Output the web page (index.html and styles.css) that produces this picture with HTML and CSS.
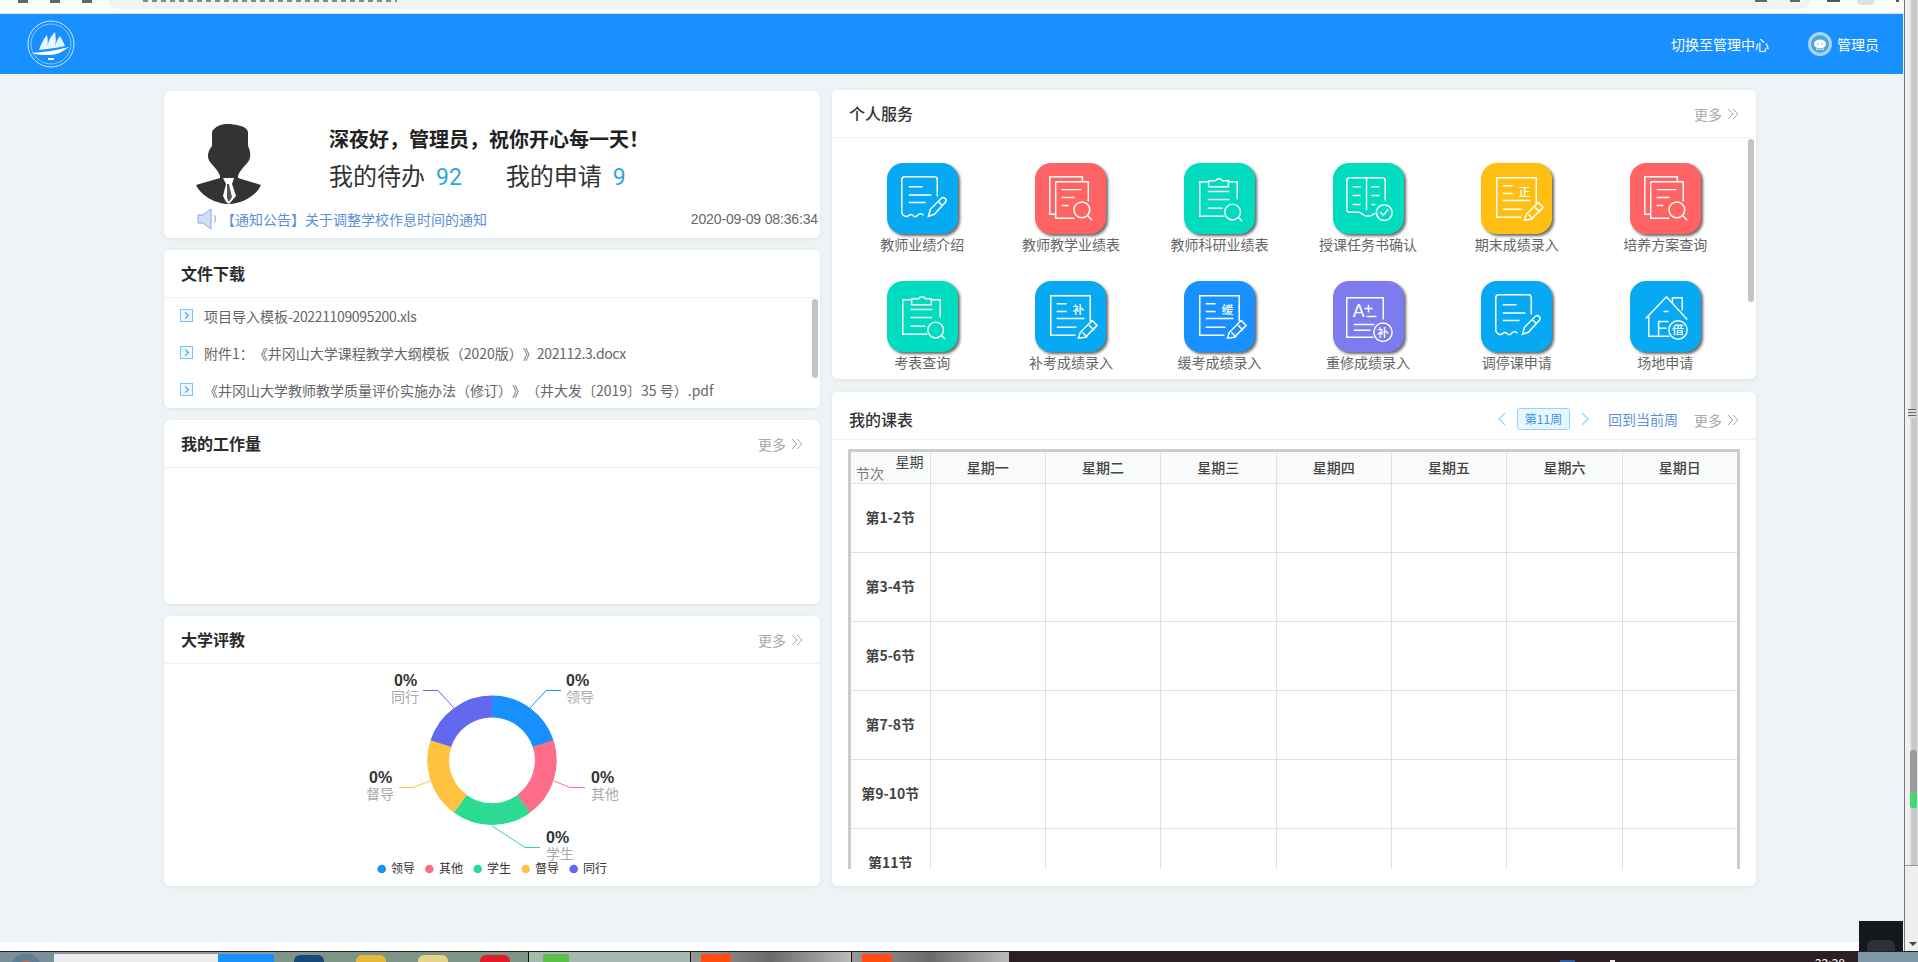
FILE: index.html
```html
<!DOCTYPE html>
<html lang="zh-CN">
<head>
<meta charset="utf-8">
<title>个人中心</title>
<link rel="stylesheet" href="styles.css">
</head>
<body>
<div class="shell">
  <div class="shell-main">
    <div class="chrome">
      <div class="chrome-nav"><i></i><i></i><i></i></div>
      <div class="address"><span></span></div>
      <div class="chrome-tools"><i></i><i class="round"></i><i class="dot"></i></div>
    </div>
    <div class="viewport">
      <header class="topbar">
        <svg class="logo" viewBox="0 0 48 48" width="48" height="48" aria-hidden="true">
          <circle cx="24" cy="24" r="23" fill="none" stroke="#cfeaff" stroke-width="1"/>
          <circle cx="24" cy="24" r="20" fill="none" stroke="#cfeaff" stroke-width=".6"/>
          <path d="M5 33c10-1 22-2 37-6-7 5-12 8-20 8-6 0-12 0-17-2z" fill="#fff"/>
          <path d="M12 30c2-6 4-10 8-15 1 5 1 10 0 14zM20 29c1-7 3-12 8-17 1 6 1 11 0 16zM28 28c1-5 2-9 5-12 2 4 4 7 5 10z" fill="#eaf6ff"/>
          <rect x="21" y="38" width="6" height="2" fill="#e6f4ff"/>
        </svg>
        <div class="topbar-right">
          <span class="switch">切换至管理中心</span>
          <span class="user">
            <svg viewBox="0 0 24 24" width="24" height="24" aria-hidden="true">
              <circle cx="12" cy="12" r="12" fill="#a9d5f3"/>
              <circle cx="12" cy="12" r="9" fill="#4ba6e8"/>
              <ellipse cx="12" cy="12" rx="6" ry="4.6" fill="#fff"/>
              <path d="M8 16c2 2 6 2 8 0v2H8z" fill="#d9eefc"/>
              <circle cx="10" cy="12" r=".8" fill="#6fb7ea"/><circle cx="14" cy="12" r=".8" fill="#6fb7ea"/>
            </svg>
            管理员
          </span>
        </div>
      </header>
      <main class="content">
        <div class="col-left">
          <section class="card welcome">
            <div class="welcome-main">
              <svg class="avatar" viewBox="0 0 66 80" width="66" height="80" aria-hidden="true">
                <path d="M16 8C18 3 26-1 34 0c10 1 17 3 18 8v14c3 6 3 12 0 16-3 4-8 8-10 14v2l23 7c-5 11-19 19-32 19S5 72 0 61l24-7v-2c-2-6-7-10-10-14-3-4-3-10 2-16z" fill="#333"/>
                <path d="M27 54h11l-2 6 4 12-7 8-3-2-3-6 3-12z" fill="#fff"/>
                <path d="M31 60h2l3 13-3 5-2-4z" fill="#555"/>
              </svg>
              <div class="welcome-text">
                <h2>深夜好，管理员，祝你开心每一天！</h2>
                <div class="counts">
                  <span class="count">我的待办<b>92</b></span>
                  <span class="count">我的申请<b>9</b></span>
                </div>
              </div>
            </div>
            <div class="notice">
              <svg viewBox="0 0 22 22" width="22" height="22" aria-hidden="true">
                <path d="M1 7h5l8-6v20l-8-6H1z" fill="#cfe0f7" stroke="#7fa8e2"/>
                <path d="M17 7c2 2.500 2 5.500 0 8" fill="none" stroke="#7fa8e2"/>
              </svg>
              <a class="notice-link">【通知公告】关于调整学校作息时间的通知</a>
              <time>2020-09-09 08:36:34</time>
            </div>
          </section>

          <section class="card files">
            <div class="card-head"><h3>文件下载</h3></div>
            <div class="file-list">
              <div class="file"><i class="file-ico"></i><span>项目导入模板<span class="nums">-20221109095200.xls</span></span></div>
              <div class="file"><i class="file-ico"></i><span>附件1：《井冈山大学课程教学大纲模板（2020版）》<span class="nums">202112.3.docx</span></span></div>
              <div class="file"><i class="file-ico"></i><span>《井冈山大学教师教学质量评价实施办法（修订）》（井大发〔2019〕35 号）.pdf</span></div>
              <div class="scroll-thumb file-thumb"></div>
            </div>
          </section>

          <section class="card workload">
            <div class="card-head"><h3>我的工作量</h3><span class="more">更多<svg viewBox="0 0 12 12" width="12" height="12"><path d="M1 1l5 5-5 5M6 1l5 5-5 5" fill="none" stroke="#aaa"/></svg></span></div>
          </section>

          <section class="card review">
            <div class="card-head"><h3>大学评教</h3><span class="more">更多<svg viewBox="0 0 12 12" width="12" height="12"><path d="M1 1l5 5-5 5M6 1l5 5-5 5" fill="none" stroke="#aaa"/></svg></span></div>
            <svg class="chart" viewBox="0 0 656 222" width="656" height="222">
              <g fill="none" stroke-width="21.800">
                <circle cx="328" cy="96.300" r="53.800" stroke="#1890ff" stroke-dasharray="67.610 270.430" transform="rotate(-90 328 96.300)"/>
                <circle cx="328" cy="96.300" r="53.800" stroke="#ff6d88" stroke-dasharray="67.610 270.430" transform="rotate(-18 328 96.300)"/>
                <circle cx="328" cy="96.300" r="53.800" stroke="#2bdb92" stroke-dasharray="67.610 270.430" transform="rotate(54 328 96.300)"/>
                <circle cx="328" cy="96.300" r="53.800" stroke="#ffc23f" stroke-dasharray="67.610 270.430" transform="rotate(126 328 96.300)"/>
                <circle cx="328" cy="96.300" r="53.800" stroke="#6369ee" stroke-dasharray="67.610 270.430" transform="rotate(198 328 96.300)"/>
              </g>
              <g fill="none" stroke-width="1">
                <polyline points="366,44 382,26.500 397,26.500" stroke="#1890ff"/>
                <polyline points="390,117 406,123.500 421,123.500" stroke="#ff6d88"/>
                <polyline points="328,162 361,183.500 376,183.500" stroke="#2bdb92"/>
                <polyline points="266,117 249,123.500 235,123.500" stroke="#ffc23f"/>
                <polyline points="290,44 274,26.500 259,26.500" stroke="#6369ee"/>
              </g>
              <g class="pct">
                <text x="402" y="22">0%</text>
                <text x="427" y="119">0%</text>
                <text x="382" y="179">0%</text>
                <text x="205" y="119">0%</text>
                <text x="230" y="22">0%</text>
              </g>
              <g class="lab">
                <text x="402" y="38">领导</text>
                <text x="427" y="135">其他</text>
                <text x="382" y="195">学生</text>
                <text x="202" y="135">督导</text>
                <text x="227" y="38">同行</text>
              </g>
              <g>
                <circle cx="217.700" cy="205" r="4.300" fill="#1890ff"/>
                <circle cx="265.300" cy="205" r="4.300" fill="#ff6d88"/>
                <circle cx="313.700" cy="205" r="4.300" fill="#2bdb92"/>
                <circle cx="361.700" cy="205" r="4.300" fill="#ffc23f"/>
                <circle cx="409.700" cy="205" r="4.300" fill="#6369ee"/>
              </g>
              <g class="leg">
                <text x="227" y="209">领导</text>
                <text x="275" y="209">其他</text>
                <text x="323" y="209">学生</text>
                <text x="371" y="209">督导</text>
                <text x="419" y="209">同行</text>
              </g>
            </svg>
          </section>
        </div>

        <div class="col-right">
          <section class="card services">
            <div class="card-head"><h3>个人服务</h3><span class="more">更多<svg viewBox="0 0 12 12" width="12" height="12"><path d="M1 1l5 5-5 5M6 1l5 5-5 5" fill="none" stroke="#aaa"/></svg></span></div>
            <div class="svc-grid">
              <div class="svc"><div class="svc-ico c-sky"><svg viewBox="0 0 72 72"><use href="#i-bill"/></svg></div><span>教师业绩介绍</span></div>
              <div class="svc"><div class="svc-ico c-red"><svg viewBox="0 0 72 72"><use href="#i-docs"/></svg></div><span>教师教学业绩表</span></div>
              <div class="svc"><div class="svc-ico c-teal"><svg viewBox="0 0 72 72"><use href="#i-clip"/></svg></div><span>教师科研业绩表</span></div>
              <div class="svc"><div class="svc-ico c-teal"><svg viewBox="0 0 72 72"><use href="#i-book"/></svg></div><span>授课任务书确认</span></div>
              <div class="svc"><div class="svc-ico c-amber"><svg viewBox="0 0 72 72"><use href="#i-sheet"/><text class="ico-t" x="38" y="33">正</text></svg></div><span>期末成绩录入</span></div>
              <div class="svc"><div class="svc-ico c-red"><svg viewBox="0 0 72 72"><use href="#i-docs"/></svg></div><span>培养方案查询</span></div>
              <div class="svc"><div class="svc-ico c-teal"><svg viewBox="0 0 72 72"><use href="#i-clip"/></svg></div><span>考表查询</span></div>
              <div class="svc"><div class="svc-ico c-sky"><svg viewBox="0 0 72 72"><use href="#i-sheet"/><text class="ico-t" x="38" y="33">补</text></svg></div><span>补考成绩录入</span></div>
              <div class="svc"><div class="svc-ico c-blue"><svg viewBox="0 0 72 72"><use href="#i-sheet"/><text class="ico-t" x="38" y="33">缓</text></svg></div><span>缓考成绩录入</span></div>
              <div class="svc"><div class="svc-ico c-violet"><svg viewBox="0 0 72 72"><use href="#i-grade"/><text class="ico-a" x="20" y="37">A</text><text class="ico-t" x="44.700" y="56.500">补</text></svg></div><span>重修成绩录入</span></div>
              <div class="svc"><div class="svc-ico c-sky"><svg viewBox="0 0 72 72"><use href="#i-bill"/></svg></div><span>调停课申请</span></div>
              <div class="svc"><div class="svc-ico c-sky"><svg viewBox="0 0 72 72"><use href="#i-house"/><text class="ico-t" x="42.700" y="54">借</text></svg></div><span>场地申请</span></div>
            </div>
            <div class="scroll-thumb svc-thumb"></div>
          </section>

          <section class="card schedule">
            <div class="card-head">
              <h3>我的课表</h3>
              <div class="week-nav">
                <svg viewBox="0 0 10 14" width="10" height="14"><path d="M8 1L2 7l6 6" fill="none" stroke="#9bd3f5" stroke-width="1.300"/></svg>
                <span class="week">第11周</span>
                <svg viewBox="0 0 10 14" width="10" height="14"><path d="M2 1l6 6-6 6" fill="none" stroke="#9bd3f5" stroke-width="1.300"/></svg>
                <a class="back">回到当前周</a>
              </div>
              <span class="more">更多<svg viewBox="0 0 12 12" width="12" height="12"><path d="M1 1l5 5-5 5M6 1l5 5-5 5" fill="none" stroke="#aaa"/></svg></span>
            </div>
            <div class="table-wrap">
              <table class="tt">
                <thead>
                  <tr>
                    <th class="corner"><span class="c-week">星期</span><span class="c-sec">节次</span></th>
                    <th>星期一</th><th>星期二</th><th>星期三</th><th>星期四</th><th>星期五</th><th>星期六</th><th>星期日</th>
                  </tr>
                </thead>
                <tbody>
                  <tr><th>第1-2节</th><td></td><td></td><td></td><td></td><td></td><td></td><td></td></tr>
                  <tr><th>第3-4节</th><td></td><td></td><td></td><td></td><td></td><td></td><td></td></tr>
                  <tr><th>第5-6节</th><td></td><td></td><td></td><td></td><td></td><td></td><td></td></tr>
                  <tr><th>第7-8节</th><td></td><td></td><td></td><td></td><td></td><td></td><td></td></tr>
                  <tr><th>第9-10节</th><td></td><td></td><td></td><td></td><td></td><td></td><td></td></tr>
                  <tr><th>第11节</th><td></td><td></td><td></td><td></td><td></td><td></td><td></td></tr>
                </tbody>
              </table>
            </div>
          </section>
        </div>
      </main>
      <div class="corner-box"></div>
    </div>
  </div>
  <div class="page-scroll">
    <div class="ps-track"></div>
    <div class="ps-end"></div>
    <div class="grip"></div>
    <div class="thumb"><div class="thumb-green"></div></div>
  </div>
</div>
<footer class="taskbar">
  <span class="tb-start"></span><span class="tb-search"></span><span class="tb-blue"></span>
  <span class="tb-apps"><i class="a1"></i><i class="a2"></i><i class="a3"></i><i class="a4"></i></span>
  <span class="tb-task t1"></span><span class="tb-task t2"></span><span class="tb-task t3"></span>
  <span class="tb-rest"><b>22:28</b></span>
  <span class="tb-end"></span>
</footer>

<svg class="defs" width="0" height="0" aria-hidden="true">
  <defs>
    <g id="i-bill" fill="none" stroke="#fff" stroke-width="1.500">
      <path d="M15 51V17a3 3 0 0 1 3-3h30a3 3 0 0 1 3 3v17"/>
      <path d="M15 51q2 4 6 3 3-3 5-1 3 3 5 0 3-3 6 0"/>
      <path d="M22 24h14M22 32.500h23M22 40h17"/>
      <path d="M42 54l2-7 11-11a2.500 2.500 0 0 1 4 4L48 52z"/><path d="M52 39l4 4"/>
    </g>
    <g id="i-docs" fill="none" stroke="#fff" stroke-width="1.500">
      <path d="M21 52h-6V14h33v5"/>
      <path d="M21 19h33v20M21 19v37h19"/>
      <path d="M27 27h20M27 35h13M27 43h7"/>
      <circle cx="47.500" cy="47.500" r="8"/><path d="M53 53l5 5"/>
    </g>
    <g id="i-clip" fill="none" stroke="#fff" stroke-width="1.500">
      <path d="M25 19h-9v35h25M45 19h9v18"/>
      <path d="M25 24v-6h7a4 4 0 0 1 7 0h6v6z"/>
      <path d="M24 29h22M24 37h22M24 46h15"/>
      <circle cx="49.300" cy="49.700" r="8"/><path d="M55 55l4 4"/>
    </g>
    <g id="i-book" fill="none" stroke="#fff" stroke-width="1.500">
      <path d="M34 15H17a3 3 0 0 0-3 3v29a3 3 0 0 0 3 3h9c3 0 5 4 9 4s6-2 8-3"/>
      <path d="M34 15h16a3 3 0 0 1 3 3v20M34 15v33"/>
      <path d="M20 24h8M20 33h8M20 42h8M39 24h8M39 33h8M39 42h4"/>
      <circle cx="52" cy="50.300" r="8"/><path d="M48 50l3 3 5-6"/>
    </g>
    <g id="i-sheet" fill="none" stroke="#fff" stroke-width="1.500">
      <path d="M56 41V15H16v40h25"/>
      <path d="M22 23h10M22 31h10M22 38h28M22 47h20"/>
      <path d="M44 58l2-6 12-12 5 5-12 12z"/><path d="M48 52l5 5M55 45l5 5"/>
    </g>
    <g id="i-grade" fill="none" stroke="#fff" stroke-width="1.500">
      <path d="M51 39V17H14v40h27"/>
      <path d="M21 44h21M21 50h17M34 36h10M36 24v8M32 28h8"/>
      <circle cx="50.700" cy="52" r="9.300"/>
    </g>
    <g id="i-house" fill="none" stroke="#fff" stroke-width="1.500">
      <path d="M16 38l21-22 21 23"/>
      <path d="M43 22v-5h10v13"/>
      <path d="M19 35v21h21"/>
      <path d="M29 56V41h10M29 48h8"/>
      <path d="M34 31h5"/>
      <circle cx="48.700" cy="49.700" r="9.300"/>
    </g>
  </defs>
</svg>
</body>
</html>
```

FILE: styles.css
```css
* { box-sizing: border-box; }
html, body { margin: 0; padding: 0; height: 962px; overflow: hidden; background: #fff; }
body {
  font-family: "Noto Sans CJK SC", "Liberation Sans", sans-serif;
  font-size: 14px;
  color: #333;
  display: flex;
  flex-direction: column;
  text-spacing-trim: space-all;
}
h2, h3 { margin: 0; }

.shell { height: 951px; flex: none; display: flex; }
.shell-main { width: 1904px; flex: none; display: flex; flex-direction: column; }

/* browser chrome remnant */
.chrome { height: 14px; flex: none; display: flex; align-items: flex-start; background: #fff; border-bottom: 1px solid #cfe6f5; overflow: hidden; }
.chrome-nav { width: 108px; flex: none; display: flex; gap: 22px; padding-left: 18px; }
.chrome-nav i { width: 10px; height: 3px; background: #666; }
.address { width: 1702px; flex: none; height: 9px; background: #f1f3f4; border-radius: 0 0 12px 12px; position: relative; }
.address span { position: absolute; left: 35px; top: 0; width: 254px; height: 2px; background: repeating-linear-gradient(90deg, #888 0 5px, transparent 5px 9px); }
.address::before, .address::after { content: ""; position: absolute; top: 0; height: 2px; background: #666; }
.address::before { right: 43px; width: 12px; }
.address::after { right: 10px; width: 10px; }
.chrome-tools { flex: 1; display: flex; gap: 17px; padding-left: 17px; }
.chrome-tools i { width: 13px; height: 2px; background: #555; flex: none; }
.chrome-tools i.round { width: 18px; height: 5px; background: #dfe1e5; border-radius: 0 0 9px 9px; }
.chrome-tools i.dot { width: 3px; height: 2px; margin-left: 4px; }

.viewport { flex: 1; background: #eef3f5; position: relative; border-bottom: 9px solid #fff; display: flex; flex-direction: column; }
.topbar { height: 60px; flex: none; width: 1903px; background: #1890ff; display: flex; align-items: center; justify-content: space-between; padding: 0 24px 0 27px; color: #fff; }
.logo { display: block; margin-top: -1px; }
.topbar-right { display: flex; align-items: center; gap: 39px; }
.user { display: flex; align-items: center; gap: 5px; }

.content { flex: 1; display: flex; gap: 12px; padding: 16px 0 0 164px; align-items: flex-start; }
.col-left { width: 656px; display: flex; flex-direction: column; gap: 12px; padding-top: 1px; }
.col-right { width: 924px; display: flex; flex-direction: column; gap: 13px; }

.card { background: #fff; border-radius: 6px; box-shadow: 0 1px 4px rgba(0,0,0,.07); position: relative; overflow: hidden; }
.card-head { height: 48px; border-bottom: 1px solid #eef0f1; display: flex; align-items: center; justify-content: space-between; padding: 0 17px 2px; }
.card-head h3 { font-size: 16px; font-weight: 700; color: #2b2b2b; }
.col-right .card-head h3 { font-weight: 500; color: #333; }
.more { display: flex; align-items: center; gap: 5px; color: #aaa; font-size: 14px; margin-top: 2px; }
.schedule .card-head { padding: 6px 17px 0; }

.welcome { height: 147px; }
.welcome-main { display: flex; padding: 33px 0 0 32px; height: 114px; }
.avatar { display: block; flex: none; }
.welcome-text { margin-left: 67px; }
.welcome-text h2 { font-size: 20px; line-height: 30px; font-weight: 700; color: #222; }
.counts { display: flex; gap: 44px; margin-top: 4px; font-size: 24px; line-height: 34px; color: #333; }
.count b { font-weight: 400; font-size: 23px; color: #2ea7e0; margin-left: 11px; font-family: "Roboto", "Noto Sans CJK SC", sans-serif; }
.notice { display: flex; align-items: center; padding: 0 2px 0 33px; height: 28px; }
.notice svg { flex: none; }
.notice-link { color: #5b8fd9; margin-left: 2px; flex: 1; }
.notice time { color: #666; font-family: "Liberation Sans", sans-serif; font-size: 14px; letter-spacing: -.15px; }

.files { height: 158px; }
.file-list { position: relative; padding: 0 16px; margin-top: -1px; }
.file { height: 37px; display: flex; align-items: center; color: #666; white-space: nowrap; }
.nums { letter-spacing: -.35px; }
.file-ico { width: 13px; height: 13px; margin-right: 11px; border: 1.500px solid #7cc4f2; background: #eef7fd; position: relative; flex: none; }
.file-ico::after { content: ""; position: absolute; left: 2px; top: 2.500px; width: 4px; height: 4px; border-top: 1px solid #3a9ee0; border-right: 1px solid #3a9ee0; transform: rotate(45deg); }
.scroll-thumb { position: absolute; background: #c4c4c4; border-radius: 3px; width: 6px; }
.file-thumb { top: 2px; right: 2px; height: 79px; }
.workload { height: 184px; }
.review { height: 270px; }
.chart { display: block; }
.pct text { font: 700 16px "Liberation Sans", sans-serif; fill: #333; }
.lab text { font-size: 14px; fill: #aaa; }
.leg text { font-size: 12px; fill: #333; }

.services { height: 289px; }
.svc-grid { display: grid; grid-template-columns: repeat(6, 148.600px); padding: 25px 0 0 16px; row-gap: 20px; }
.svc { display: flex; flex-direction: column; align-items: center; height: 98px; color: #666; font-size: 14px; line-height: 20px; white-space: nowrap; }
.svc-ico { width: 71px; height: 71px; border-radius: 16px; box-shadow: 2px 2px 3px rgba(0,0,0,.6); flex: none; }
.svc-ico svg { display: block; width: 71px; height: 71px; }
.c-sky { background: #07aaf2; }
.c-red { background: #ff6363; }
.c-teal { background: #00dcc0; }
.c-amber { background: #ffbf12; }
.c-blue { background: #1890ff; }
.c-violet { background: #7c7cee; }
.ico-t { font-size: 12px; font-weight: 500; fill: #fff; }
.ico-a { font: 400 18px "Liberation Sans", sans-serif; fill: #fff; }
.svc-thumb { top: 49px; right: 2px; height: 163px; }

.schedule { height: 494px; }
.week-nav { display: flex; align-items: center; margin-left: auto; margin-right: 16px; gap: 10px; }
.week { height: 22px; width: 53px; border: 1px solid #91d5ff; background: #e6f7ff; color: #3a94e6; font-size: 12px; line-height: 20px; text-align: center; border-radius: 3px; }
.back { color: #5b8fd9; margin-left: 8px; }
.table-wrap { margin: 9px 0 0 16px; width: 892px; height: 420px; overflow: hidden; border: solid #ccc; border-width: 3px 3px 0 3px; }
.tt { border-collapse: collapse; table-layout: fixed; width: 887px; }
.tt th, .tt td { border: 1px solid #e0e0e0; padding: 0; }
.tt tr > :first-child { width: 79px; border-left: 0; }
.tt thead th { height: 31px; background: #f9fbfb; font-size: 14px; font-weight: 500; color: #444; border-top: 0; }
.tt tbody th { font-size: 14px; font-weight: 700; color: #444; padding-bottom: 2px; }
.tt tbody tr { height: 69px; }
.corner { position: relative; }
.tt thead .c-week { position: absolute; right: 6px; top: 0; font-size: 14px; line-height: 18px; font-weight: 400; color: #444; }
.tt thead .c-sec { position: absolute; left: 5px; bottom: 1px; font-size: 14px; line-height: 18px; font-weight: 400; color: #777; }

.corner-box { position: absolute; right: 1px; bottom: -9px; width: 44px; height: 30px; background: #16181f; }
.corner-box::after { content: ""; position: absolute; right: 8px; bottom: 0; width: 28px; height: 11px; background: #2f3137; border-radius: 6px 6px 0 0; }

.page-scroll { flex: 1; position: relative; border-left: 1px solid #777; display: flex; flex-direction: column; }
.ps-track { height: 866px; flex: none; border-bottom: 1px solid #999; background: linear-gradient(90deg, #f2f2f2, #eee 35%, #c8c8c8 55%, #c8c8c8 90%, #ececec); }
.ps-end { flex: 1; background: #efefef; position: relative; }
.ps-end::after { content: ""; position: absolute; left: 4px; bottom: 5px; border: solid transparent; border-width: 4px 4px 0; border-top-color: #444; }
.grip { position: absolute; top: 409px; left: 3px; width: 8px; height: 9px; background: repeating-linear-gradient(180deg, #666 0 1px, #ddd 1px 3px); }
.thumb { position: absolute; top: 750px; left: 5px; width: 7px; height: 58px; background: #9a9a9a; border-radius: 3px; overflow: hidden; }
.thumb-green { position: absolute; bottom: 0; left: 0; width: 100%; height: 15px; background: #3ddc6e; }

.taskbar { flex: 1; display: flex; align-items: stretch; border-top: 1px solid #222; background: #2a2024; overflow: hidden; }
.tb-start { width: 54px; background: radial-gradient(circle at 26px 17px, #c8644a 0 8px, #5f7f96 9px 15px, #7b8f99 16px); }
.tb-search { width: 164px; background: #ececec; border-top: 2px solid #8a9aa3; }
.tb-blue { width: 56px; background: #1890ff; border-top: 2px solid #8a9aa3; }
.tb-apps { width: 254px; background: #7e9687; display: flex; gap: 32px; padding: 3px 0 0 20px; }
.tb-apps i { width: 30px; height: 10px; border-radius: 6px 6px 0 0; }
.tb-apps .a1 { background: #174a78; }
.tb-apps .a2 { background: #e9b83b; }
.tb-apps .a3 { background: #e7d48a; }
.tb-apps .a4 { background: #e01e2b; }
.tb-task { border-left: 1px solid #111; }
.tb-task.t1 { width: 162px; background: linear-gradient(#5cbf4a, #5cbf4a) 14px 2px/26px 8px no-repeat, #a7bab2; }
.tb-task.t2 { width: 161px; background: linear-gradient(#ff4d14, #ff4d14) 10px 2px/30px 9px no-repeat, linear-gradient(90deg, #999, #6b6b6b 50%, #bcbcbc); }
.tb-task.t3 { width: 158px; background: linear-gradient(#ff4d14, #ff4d14) 10px 2px/30px 9px no-repeat, linear-gradient(90deg, #999, #6b6b6b 50%, #bcbcbc); }
.tb-rest { flex: 1; background: linear-gradient(#2a5ea8, #2a5ea8) 551px 8px/15px 3px no-repeat, linear-gradient(#eee, #eee) 601px 8px/5px 3px no-repeat, #2b1f23; color: #fff; text-align: right; padding-right: 13px; font-size: 12px; line-height: 18px; }
.tb-rest b { font-weight: 400; display: block; margin-top: 2px; }
.tb-end { width: 60px; background: #7e97a6; }

.defs { position: absolute; }
```
